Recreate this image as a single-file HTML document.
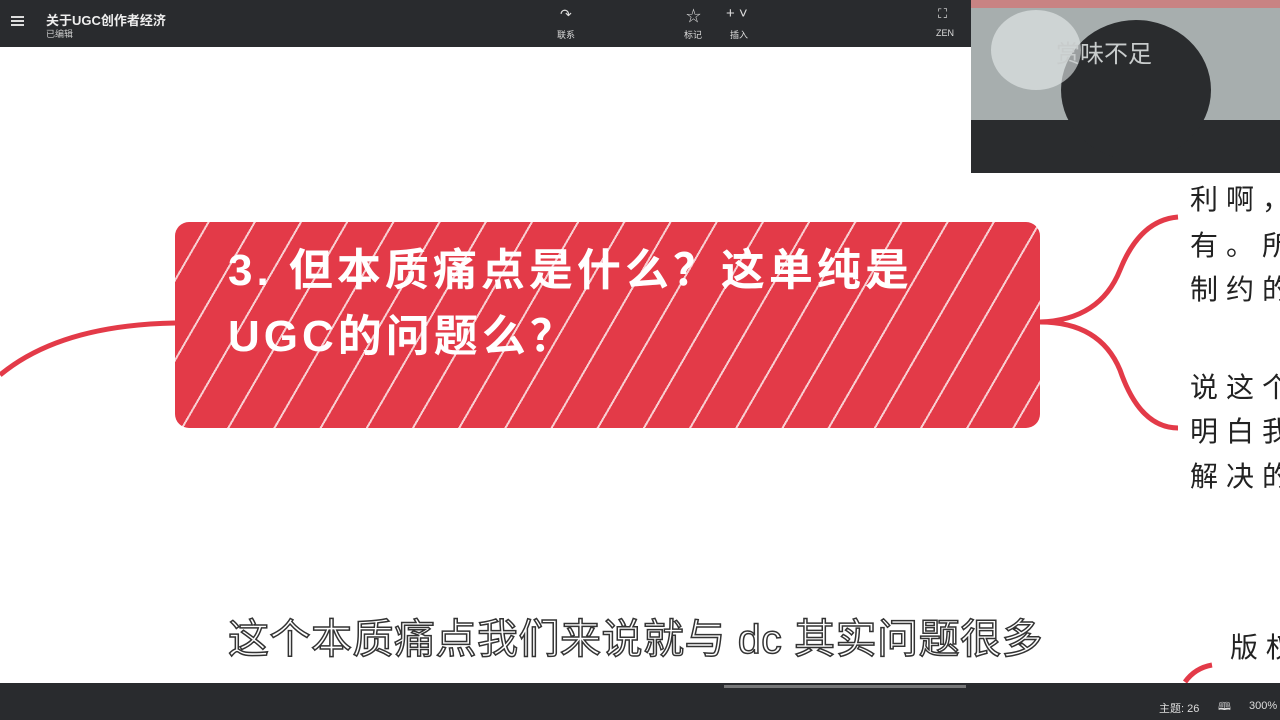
<!DOCTYPE html>
<html><head><meta charset="utf-8"><style>
body{margin:0;width:1280px;height:720px;overflow:hidden;background:#fff;position:relative;font-family:"Liberation Sans","Noto Sans CJK SC",sans-serif}
.top{position:absolute;left:0;top:0;width:1280px;height:47px;background:#292b2e;color:#e6e6e6}
.bot{position:absolute;left:0;top:683px;width:1280px;height:37px;background:#292b2e;color:#ddd;font-size:11px}
.t{position:absolute;font-size:11px;color:#ddd}
.node{position:absolute;left:175px;top:222px;width:865px;height:206px;background:#e33a48;border-radius:14px;overflow:hidden;
background-image:repeating-linear-gradient(-60deg,transparent 0 22px,rgba(255,255,255,.75) 22px 24px,transparent 24px 40px)}
.nt{position:absolute;left:228px;top:238px;font-size:44px;font-weight:bold;color:#fff;line-height:66px;letter-spacing:4px;white-space:nowrap;font-family:"Liberation Sans","Noto Sans CJK SC",sans-serif}
.r{position:absolute;left:1190px;font-size:28px;color:#222;letter-spacing:8px;white-space:nowrap}
.sub{position:absolute;left:228px;top:605px;font-size:41px;color:#fff;-webkit-text-stroke:1.5px #333;letter-spacing:0.5px;white-space:nowrap}
</style></head><body>
<div class="top">
 <div style="position:absolute;left:11px;top:16px;width:13px;height:2px;background:#ddd;box-shadow:0 4px 0 #ddd,0 8px 0 #ddd"></div>
 <div style="position:absolute;left:46px;top:10px;font-size:13px;font-weight:bold;color:#eee">关于UGC创作者经济</div>
 <div style="position:absolute;left:46px;top:27px;font-size:9px;color:#ccc">已编辑</div>
 <div class="t" style="left:560px;top:6px;font-size:14px">↷</div><div class="t" style="left:557px;top:28px;font-size:9px">联系</div>
 <div class="t" style="left:686px;top:5px;font-size:15px">☆</div><div class="t" style="left:684px;top:28px;font-size:9px">标记</div>
 <div class="t" style="left:726px;top:5px;font-size:15px">+ ˅</div><div class="t" style="left:730px;top:28px;font-size:9px">插入</div>
 <div class="t" style="left:938px;top:6px;font-size:13px">⛶</div><div class="t" style="left:936px;top:28px;font-size:9px">ZEN</div>
</div>
<div style="position:absolute;left:971px;top:0;width:309px;height:173px;background:#a7aeae;overflow:hidden">
 <div style="position:absolute;left:0;top:120px;width:309px;height:53px;background:#2a2c2e"></div>
 <div style="position:absolute;left:90px;top:20px;width:150px;height:140px;border-radius:50%;background:#2a2c2e"></div>
 <div style="position:absolute;left:20px;top:10px;width:90px;height:80px;border-radius:50%;background:#e8ecec;opacity:.6"></div>
 <div style="position:absolute;left:0;top:0;width:309px;height:8px;background:#d66;opacity:.6"></div>
 <div style="position:absolute;left:85px;top:34px;font-size:24px;color:#c8cccc">赏味不足</div>
</div>
<svg style="position:absolute;left:0;top:0" width="1280" height="720">
 <path d="M0 375 Q60 325 175 323" stroke="#e33a48" stroke-width="5" fill="none"/>
 <path d="M1040 322 Q1100 320 1120 270 Q1140 220 1178 217" stroke="#e33a48" stroke-width="5" fill="none"/>
 <path d="M1040 322 Q1100 322 1120 370 Q1140 428 1178 428" stroke="#e33a48" stroke-width="5" fill="none"/>
 <path d="M1185 682 Q1195 668 1212 665" stroke="#e33a48" stroke-width="5" fill="none"/>
</svg>
<div class="node"></div>
<div class="nt">3. 但本质痛点是什么？这单纯是<br>UGC的问题么？</div>
<div class="r" style="top:178px">利啊，</div>
<div class="r" style="top:224px">有。所</div>
<div class="r" style="top:268px">制约的</div>
<div class="r" style="top:366px">说这个</div>
<div class="r" style="top:410px">明白我</div>
<div class="r" style="top:455px">解决的</div>
<div class="r" style="top:626px;left:1230px">版权</div>
<div class="sub">这个本质痛点我们来说就与 dc 其实问题很多</div>
<div class="bot">
 <div style="position:absolute;left:724px;top:2px;width:242px;height:3px;background:#aaa;opacity:.6"></div>
 <div style="position:absolute;left:1159px;top:17px">主题: 26</div>
 <div style="position:absolute;left:1218px;top:15px">🕮</div>
 <div style="position:absolute;left:1249px;top:17px">300%</div>
</div>
</body></html>
